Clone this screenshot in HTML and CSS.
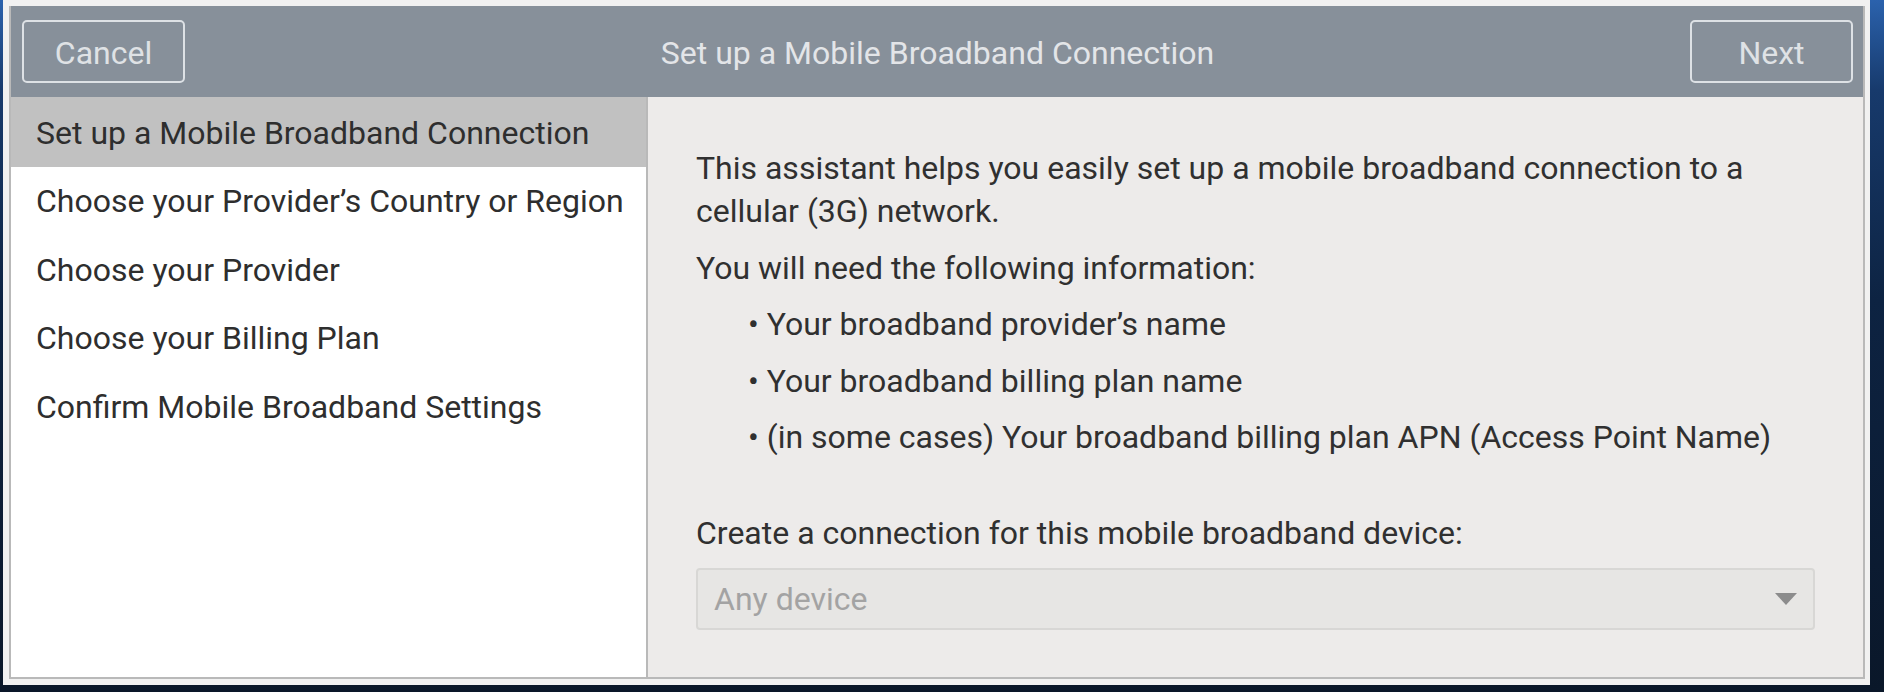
FILE: index.html
```html
<!DOCTYPE html>
<html>
<head>
<meta charset="utf-8">
<link rel="stylesheet" href="styles.css">
</head>
<body>
<div class="window">
  <div class="frame">
    <header class="titlebar">
      <button class="hbtn">Cancel</button>
      <div class="title">Set up a Mobile Broadband Connection</div>
      <button class="hbtn">Next</button>
    </header>
    <div class="main">
      <nav class="sidebar">
        <div class="step selected">Set up a Mobile Broadband Connection</div>
        <div class="step">Choose your Provider’s Country or Region</div>
        <div class="step">Choose your Provider</div>
        <div class="step">Choose your Billing Plan</div>
        <div class="step">Confirm Mobile Broadband Settings</div>
      </nav>
      <section class="content">
        <div class="info">
          <p class="line">This assistant helps you easily set up a mobile broadband connection to a cellular (3G) network.</p>
          <p class="line">You will need the following information:</p>
          <p class="line bullet">• Your broadband provider’s name</p>
          <p class="line bullet">• Your broadband billing plan name</p>
          <p class="line bullet">• (in some cases) Your broadband billing plan APN (Access Point Name)</p>
        </div>
        <p class="line label">Create a connection for this mobile broadband device:</p>
        <div class="combo">
          <span class="combo-text">Any device</span>
          <svg class="combo-arrow" width="22" height="12" viewBox="0 0 22 12"><path d="M0 0 H22 L11 12 Z" fill="#8c8c8c"/></svg>
        </div>
      </section>
    </div>
  </div>
</div>
</body>
</html>
```
FILE: styles.css
```css
html, body {
  margin: 0;
  padding: 0;
}
body {
  width: 1884px;
  height: 692px;
  overflow: hidden;
  background: linear-gradient(180deg, #2b62ad 0px, #173a6c 90px, #0d2342 300px, #0a1729 100%);
  font-family: Roboto, "Noto Sans", sans-serif;
}
.window {
  margin-left: 3px;
  width: 1867px;
  height: 685px;
  box-sizing: border-box;
  padding: 6px 5px 6px 6px;
  background: #f1f1f1;
}
.frame {
  width: 1856px;
  height: 673px;
  box-sizing: border-box;
  border: 2px solid #b9b9b9;
  border-top: none;
  display: flex;
  flex-direction: column;
}
.titlebar {
  height: 91px;
  flex: none;
  background: #87909a;
  display: flex;
  align-items: center;
  padding: 0 10px 0 11px;
}
.hbtn {
  width: 163px;
  height: 63px;
  flex: none;
  box-sizing: border-box;
  border: 2px solid #dde1e5;
  border-radius: 5px;
  background: transparent;
  color: #dfe2e5;
  font-family: Roboto, "Noto Sans", sans-serif;
  font-size: 32px;
  padding: 3px 0 0 0;
}
.title {
  flex: 1;
  text-align: center;
  color: #e3e5e8;
  font-size: 32px;
  padding-top: 3px;
}
.main {
  flex: 1;
  display: flex;
  min-height: 0;
}
.sidebar {
  width: 635px;
  flex: none;
  background: #ffffff;
  border-right: 2px solid #b9b9b9;
  display: flex;
  flex-direction: column;
}
.step {
  height: 68.5px;
  line-height: 68.5px;
  padding-left: 25px;
  font-size: 32px;
  color: #2e2e2e;
  white-space: nowrap;
}
.step.selected {
  height: 70px;
  box-sizing: border-box;
  padding-top: 3px;
  line-height: 67px;
  background: #c1c1c1;
}
.content {
  flex: 1;
  background: #edebea;
  padding: 50px 48px 0 48px;
  display: flex;
  flex-direction: column;
}
.info {
  display: flex;
  flex-direction: column;
  gap: 13.5px;
}
.line {
  margin: 0;
  font-size: 32px;
  line-height: 43px;
  color: #303030;
}
.bullet {
  padding-left: 52px;
}
.label {
  margin-top: 53px;
}
.combo {
  margin-top: 13px;
  height: 62px;
  box-sizing: border-box;
  border: 2px solid #d8d7d5;
  border-radius: 4px;
  background: #e7e6e4;
  display: flex;
  align-items: center;
  justify-content: space-between;
  padding: 0 16px 0 16px;
}
.combo-text {
  font-size: 32px;
  color: #a3a3a3;
}
.combo-arrow {
  display: block;
}
```
